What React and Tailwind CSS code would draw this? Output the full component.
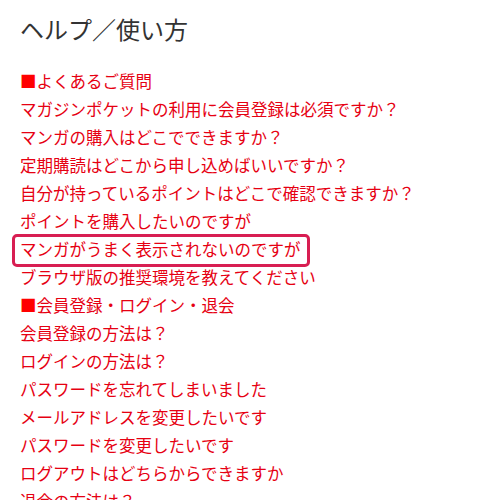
import React from "react";

const font = { fontFamily: '"Noto Sans CJK JP", "Noto Sans", sans-serif' };

const items = [
  { t: "よくあるご質問", h: true },
  { t: "マガジンポケットの利用に会員登録は必須ですか？" },
  { t: "マンガの購入はどこでできますか？" },
  { t: "定期購読はどこから申し込めばいいですか？" },
  { t: "自分が持っているポイントはどこで確認できますか？" },
  { t: "ポイントを購入したいのですが" },
  { t: "マンガがうまく表示されないのですが", box: true },
  { t: "ブラウザ版の推奨環境を教えてください" },
  { t: "会員登録・ログイン・退会", h: true },
  { t: "会員登録の方法は？" },
  { t: "ログインの方法は？" },
  { t: "パスワードを忘れてしまいました" },
  { t: "メールアドレスを変更したいです" },
  { t: "パスワードを変更したいです" },
  { t: "ログアウトはどちらからできますか" },
  { t: "退会の方法は？" },
];

export default function App() {
  return (
    <div className="w-[500px] h-[500px] overflow-hidden bg-white" style={font}>
      <div className="px-5 pt-[11px]">
        <h1 className="text-[24px] leading-[36px] text-[#333333] font-normal">ヘルプ／使い方</h1>
        <div className="mt-[20px] text-[16.5px] leading-[28px] text-[#e60012]">
          {items.map((it, i) => (
            <div key={i} className="whitespace-nowrap">
              {it.h ? (
                <span>
                  <span className="text-[#ff0000]">■</span>
                  {it.t}
                </span>
              ) : it.box ? (
                <span className="relative inline-block">
                  {it.t}
                  <span className="absolute -left-[8px] -right-[9px] -top-[1px] -bottom-[4px] border-[3.5px] border-[#d81e52] rounded-[5px]" />
                </span>
              ) : (
                it.t
              )}
            </div>
          ))}
        </div>
      </div>
    </div>
  );
}
